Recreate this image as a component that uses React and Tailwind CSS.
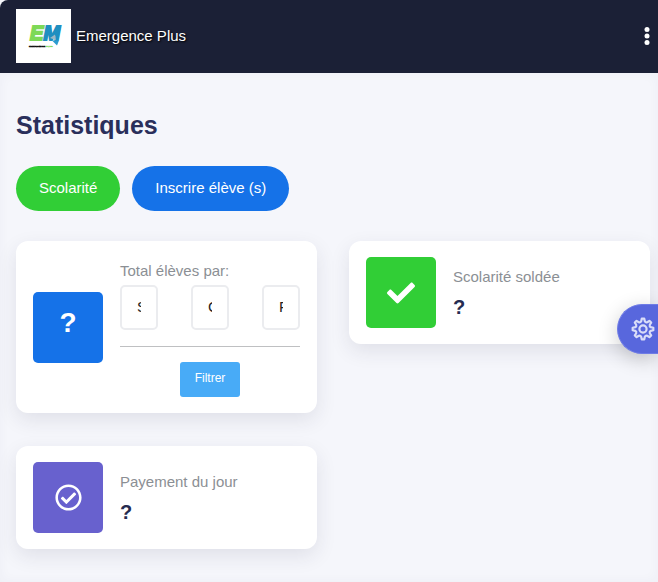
import { FaCheck, FaRegCheckCircle } from "react-icons/fa";

function Logo() {
  return (
    <svg viewBox="0 0 55 54" className="h-[54px] w-[55px] bg-white [text-shadow:none]" role="img" aria-label="Logo">
      <g fontFamily="Liberation Sans, Arial, sans-serif" fontWeight="700" fontStyle="italic">
        <text x="14" y="31" fontSize="20" fill="#7ed957" stroke="#7ed957" strokeWidth="1.8">E</text>
        <text x="27.500" y="31" fontSize="20" fill="#1f8fc0" stroke="#1f8fc0" strokeWidth="1.8">M</text>
      </g>
      <path d="M34 29l5-3.500 1 5.500z" fill="#9fb8c4" />
      <path d="M36 31.500h7l-2 5z" fill="#2a9bd0" />
      <g fontFamily="Liberation Sans, Arial, sans-serif" fontWeight="700" fontSize="2.500">
        <text x="13" y="38" fill="#111111" stroke="#111111" strokeWidth="0.6">EMERGENCE</text>
        <text x="30" y="38" fill="#7ed957" stroke="#7ed957" strokeWidth="0.3">PLUS</text>
      </g>
    </svg>
  );
}

function Dots() {
  return (
    <svg viewBox="0 0 6 20" className="h-5 w-[6px]" fill="currentColor" aria-hidden="true">
      <circle cx="3" cy="3.5" r="2.5" />
      <circle cx="3" cy="10" r="2.5" />
      <circle cx="3" cy="16.5" r="2.5" />
    </svg>
  );
}

const gearPoints = Array.from({ length: 8 }, (_, i) => {
  const at = (deg, r) => {
    const a = ((i * 45 + deg) * Math.PI) / 180;
    return `${(12 + r * Math.sin(a)).toFixed(2)} ${(12 - r * Math.cos(a)).toFixed(2)}`;
  };
  return `${i ? "L" : "M"}${at(-7, 10.4)} L${at(7, 10.4)} L${at(13, 8)} Q${at(22.5, 6.8)} ${at(32, 8)}`;
}).join(" ");

function Gear() {
  return (
    <svg viewBox="0 0 24 24" className="size-6 shrink-0" fill="none" stroke="currentColor" strokeWidth="2.2" strokeLinejoin="round" aria-hidden="true">
      <path d={`${gearPoints} Z`} />
      <circle cx="12" cy="12" r="3.600" />
    </svg>
  );
}

function Card({ tone, icon, children }) {
  return (
    <section className="flex items-center gap-[17px] rounded-xl bg-white px-[17px] py-4 shadow-[0_7px_20px_rgba(40,40,70,0.1)]">
      <div className={`flex h-[71px] w-[70px] shrink-0 items-center justify-center rounded-[5px] text-white ${tone}`}>
        {icon}
      </div>
      <div className="min-w-0 flex-1">{children}</div>
    </section>
  );
}

function Stat({ label, value }) {
  return (
    <>
      <h2 className="text-[15px] leading-6 text-[#8b8f94]">{label}</h2>
      <p className="pt-1 text-xl leading-7 font-bold text-[#262b50]">{value}</p>
    </>
  );
}

function Filter({ label, option }) {
  return (
    <select
      aria-label={label}
      className="h-[45px] w-[38px] appearance-none rounded-[5px] border-2 border-[#ebecef] bg-white px-[15px] text-[15px] text-[#222222]"
    >
      <option>{option}</option>
    </select>
  );
}

export default function App() {
  return (
    <div className="min-h-screen bg-[#f5f6fb] font-['Liberation_Sans',Arial,sans-serif]">
      <header className="flex h-[73px] items-center justify-between rounded-tl-lg bg-[#1b2036] pr-2 pb-px pl-4">
        <a href="#" className="flex items-center gap-[5px] text-[15px] text-white [text-shadow:1px_1px_2px_#000000]">
          <Logo />
          Emergence Plus
        </a>
        <button type="button" aria-label="Menu" className="pb-px text-white">
          <Dots />
        </button>
      </header>

      <main className="min-h-[calc(100vh-73px)] pt-8 pr-2 pb-8 pl-4 shadow-[inset_0_0_12px_rgba(60,60,100,0.04)]">
        <h1 className="text-[25px] leading-10 font-bold text-[#2a2f5b]">Statistiques</h1>

        <div className="mt-[21px] flex gap-3">
          <button type="button" className="h-[45px] rounded-full bg-[#31ce36] px-[23px] text-[15px] text-white">
            Scolarité
          </button>
          <button type="button" className="h-[45px] rounded-full bg-[#1572e8] px-[23px] text-[15px] text-white">
            Inscrire élève (s)
          </button>
        </div>

        <div className="mt-[30px] grid grid-cols-2 items-start gap-x-8 gap-y-[33px]">
          <Card
            tone="bg-[#1572e8]"
            icon={<span className="pb-2 text-[28px] font-bold">?</span>}
          >
            <h2 className="text-[15px] leading-7 text-[#8b8f94]">Total élèves par:</h2>
            <div className="flex justify-between">
              <Filter label="Série" option="S" />
              <Filter label="Classe" option="C" />
              <Filter label="Filière" option="F" />
            </div>
            <hr className="mt-4 border-[#bfc0c2]" />
            <div className="mt-[15px] flex justify-center">
              <button type="button" className="h-[35px] w-[60px] rounded-[3px] bg-[#48abf7] pb-[3px] text-xs text-white">
                Filtrer
              </button>
            </div>
          </Card>

          <Card tone="bg-[#31ce36]" icon={<FaCheck size={28} />}>
            <Stat label="Scolarité soldée" value="?" />
          </Card>

          <Card tone="bg-[#6861ce]" icon={<FaRegCheckCircle size={27} />}>
            <Stat label="Payement du jour" value="?" />
          </Card>
        </div>
      </main>

      <button
        type="button"
        aria-label="Paramètres"
        className="fixed top-[304px] right-0 flex h-[50px] w-[41px] items-center rounded-l-full border border-r-0 border-[#6f7ce6] bg-[#5867dd] pl-[13px] text-[#d9ddf8] shadow-[0_5px_20px_rgba(0,0,0,0.2)]"
      >
        <Gear />
      </button>
    </div>
  );
}
